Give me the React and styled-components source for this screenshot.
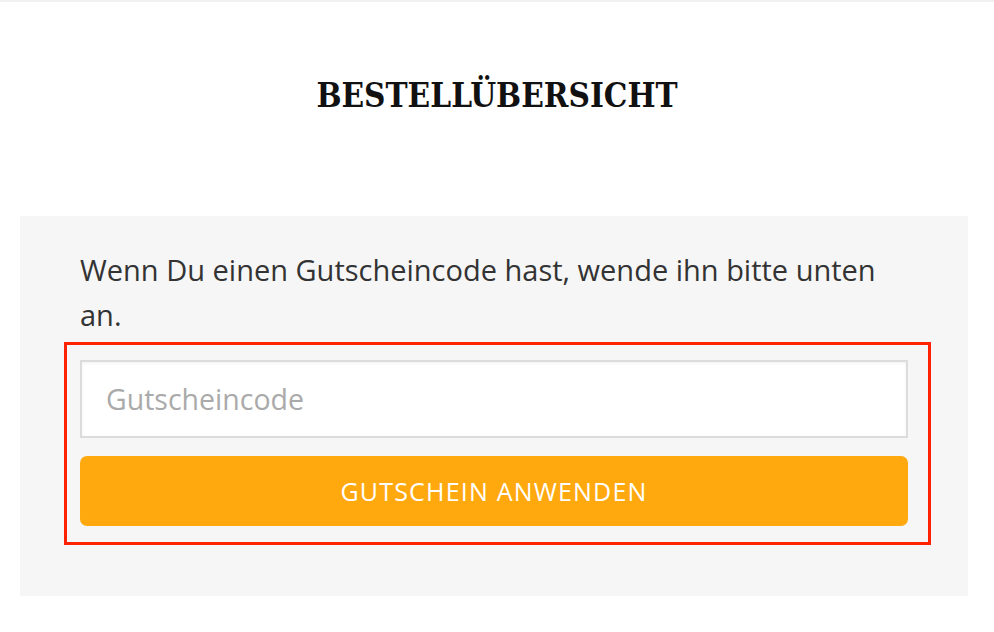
import React from "react";
import styled, { createGlobalStyle } from "styled-components";

const GlobalStyle = createGlobalStyle`
    body {
        margin: 0;
        background: #ffffff;
        font-family: "Open Sans", "Noto Sans", sans-serif;
    }
`

export default function App() {
    return (
        <>
            <GlobalStyle />
            <Page>
                <Title>BESTELLÜBERSICHT</Title>
                <CouponPanel>
                    <Hint>
                        Wenn Du einen Gutscheincode hast, wende ihn bitte unten an.
                    </Hint>
                    <Highlight>
                        <CodeInput placeholder="Gutscheincode" />
                        <ApplyButton>GUTSCHEIN ANWENDEN</ApplyButton>
                    </Highlight>
                </CouponPanel>
            </Page>
        </>
    )
}

const Page = styled.div`
    border-top: 2px solid #f1f1f1;
    min-height: 630px;
    box-sizing: border-box;
`

const Title = styled.h1`
    margin: 74px 0 100px;
    text-align: center;
    font-family: "DejaVu Serif Condensed", "DejaVu Serif", serif;
    font-weight: 700;
    font-size: 33px;
    line-height: 40px;
    color: #111;
`

const CouponPanel = styled.div`
    margin-left: 20px;
    width: 948px;
    box-sizing: border-box;
    padding: 31px 37px 51px 44px;
    background: #f6f6f6;
`

const Hint = styled.p`
    margin: 0 0 5px 16px;
    max-width: 820px;
    font-size: 29px;
    line-height: 45px;
    color: #333;
`

const Highlight = styled.div`
    border: 3px solid #ff2200;
    padding: 15px 20px 16px 13px;
    display: flex;
    flex-direction: column;
    gap: 18px;
`

const CodeInput = styled.input`
    height: 78px;
    box-sizing: border-box;
    border: 2px solid #dcdcdc;
    box-shadow: inset 0 1px 3px rgba(0, 0, 0, 0.06);
    background: #fff;
    padding: 0 24px;
    font-family: "Open Sans", "Noto Sans", sans-serif;
    font-size: 28.5px;
    outline: none;
    &::placeholder {
        color: #aaaaaa;
    }
`

const ApplyButton = styled.button`
    height: 70px;
    border: none;
    border-radius: 7px;
    background: #ffa90f;
    color: #fff;
    font-family: "Open Sans", "Noto Sans", sans-serif;
    font-size: 25px;
    letter-spacing: 1.2px;
    cursor: pointer;
`
